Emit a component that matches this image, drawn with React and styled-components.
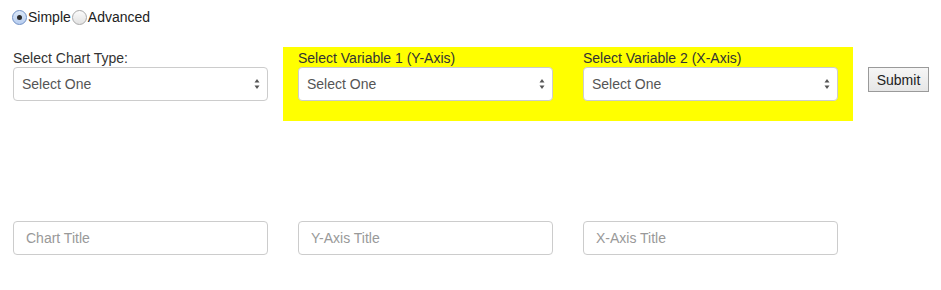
import React, { useState } from 'react'
import styled, { createGlobalStyle } from 'styled-components'

const GlobalStyle = createGlobalStyle`
  html, body {
    margin: 0;
    padding: 0;
    background: #fff;
  }
  body {
    font-family: "Liberation Sans", Arial, sans-serif;
    font-size: 14px;
    color: #333;
  }
`

const Page = styled.div`
  width: 941px;
  height: 290px;
`

const ModeRow = styled.div`
  display: flex;
  align-items: center;
  height: 20px;
  padding: 7px 0 0 12px;
  font-size: 14px;
  color: #222;
`

const ModeOption = styled.label`
  display: flex;
  align-items: center;
  gap: 1px;
  margin-right: 1px;
  cursor: pointer;
`

const RadioDot = styled.span`
  position: relative;
  width: 13px;
  height: 13px;
  border-radius: 50%;
  border: 1px solid ${(p) => (p.$on ? '#6f8fc4' : '#a9a9a9')};
  background: ${(p) =>
    p.$on
      ? 'linear-gradient(#dbe7f7, #b7cdef)'
      : 'linear-gradient(#fbfbfb, #e2e2e2)'};

  &::after {
    content: '';
    display: ${(p) => (p.$on ? 'block' : 'none')};
    position: absolute;
    left: 4px;
    top: 4px;
    width: 5px;
    height: 5px;
    border-radius: 50%;
    background: #2b2b2b;
  }
`

const Row = styled.div`
  display: flex;
  align-items: flex-start;
  margin-top: ${(p) => p.$top || 0}px;
`

const Col = styled.div`
  box-sizing: border-box;
  width: ${(p) => p.$width || 285}px;
  padding: 0 15px 0 ${(p) => (p.$first ? 13 : 15)}px;
`

const Highlight = styled.div`
  display: flex;
  width: 570px;
  height: 74px;
  background: #ffff00;
`

const Label = styled.div`
  height: 20px;
  line-height: 20px;
  padding-top: 1px;
  box-sizing: border-box;
  font-size: 14px;
  color: #333;
`

const SelectWrap = styled.div`
  position: relative;
  box-sizing: border-box;
  height: 34px;
  border: 1px solid #ccc;
  border-radius: 4px;
  background: #fff;
`

const Select = styled.select`
  appearance: none;
  box-sizing: border-box;
  width: 100%;
  height: 100%;
  border: 0;
  background: transparent;
  padding: 0 24px 0 8px;
  font-family: inherit;
  font-size: 14px;
  color: #555;
  outline: none;
`

const Arrows = styled.svg`
  position: absolute;
  right: 7px;
  top: 10px;
  pointer-events: none;
`

const SubmitButton = styled.button`
  margin-top: 20px;
  margin-left: 15px;
  box-sizing: border-box;
  height: 25px;
  width: 61px;
  padding: 0;
  border: 1px solid #9a9a9a;
  border-radius: 0;
  background: linear-gradient(#f6f6f6, #e6e6e6);
  font-family: inherit;
  font-size: 14px;
  color: #222;
`

const TextInput = styled.input`
  box-sizing: border-box;
  width: 100%;
  height: 34px;
  border: 1px solid #ccc;
  border-radius: 4px;
  padding: 0 12px;
  font-family: inherit;
  font-size: 14px;
  color: #555;
  outline: none;

  &::placeholder {
    color: #999;
  }
`

function PickOne({ label }) {
  return (
    <>
      <Label>{label}</Label>
      <SelectWrap>
        <Select defaultValue="">
          <option value="">Select One</option>
        </Select>
        <Arrows width="6" height="12" viewBox="0 0 6 12">
          <path d="M3 1 L5.5 4.5 L0.5 4.5 Z" fill="#555" />
          <path d="M3 11 L5.5 7.5 L0.5 7.5 Z" fill="#555" />
        </Arrows>
      </SelectWrap>
    </>
  )
}

export default function App() {
  const [mode, setMode] = useState('simple')

  return (
    <Page>
      <GlobalStyle />
      <ModeRow>
        <ModeOption onClick={() => setMode('simple')}>
          <RadioDot $on={mode === 'simple'} />
          Simple
        </ModeOption>
        <ModeOption onClick={() => setMode('advanced')}>
          <RadioDot $on={mode === 'advanced'} />
          Advanced
        </ModeOption>
      </ModeRow>

      <Row $top={20}>
        <Col $first $width={283}>
          <Label>Select Chart Type:</Label>
          <SelectWrap>
            <Select defaultValue="">
              <option value="">Select One</option>
            </Select>
            <Arrows width="6" height="12" viewBox="0 0 6 12">
              <path d="M3 1 L5.5 4.5 L0.5 4.5 Z" fill="#555" />
              <path d="M3 11 L5.5 7.5 L0.5 7.5 Z" fill="#555" />
            </Arrows>
          </SelectWrap>
        </Col>
        <Highlight>
          <Col>
            <PickOne label="Select Variable 1 (Y-Axis)" />
          </Col>
          <Col>
            <PickOne label="Select Variable 2 (X-Axis)" />
          </Col>
        </Highlight>
        <SubmitButton type="button">Submit</SubmitButton>
      </Row>

      <Row $top={100}>
        <Col $first $width={283}>
          <TextInput placeholder="Chart Title" />
        </Col>
        <Col>
          <TextInput placeholder="Y-Axis Title" />
        </Col>
        <Col>
          <TextInput placeholder="X-Axis Title" />
        </Col>
      </Row>
    </Page>
  )
}
